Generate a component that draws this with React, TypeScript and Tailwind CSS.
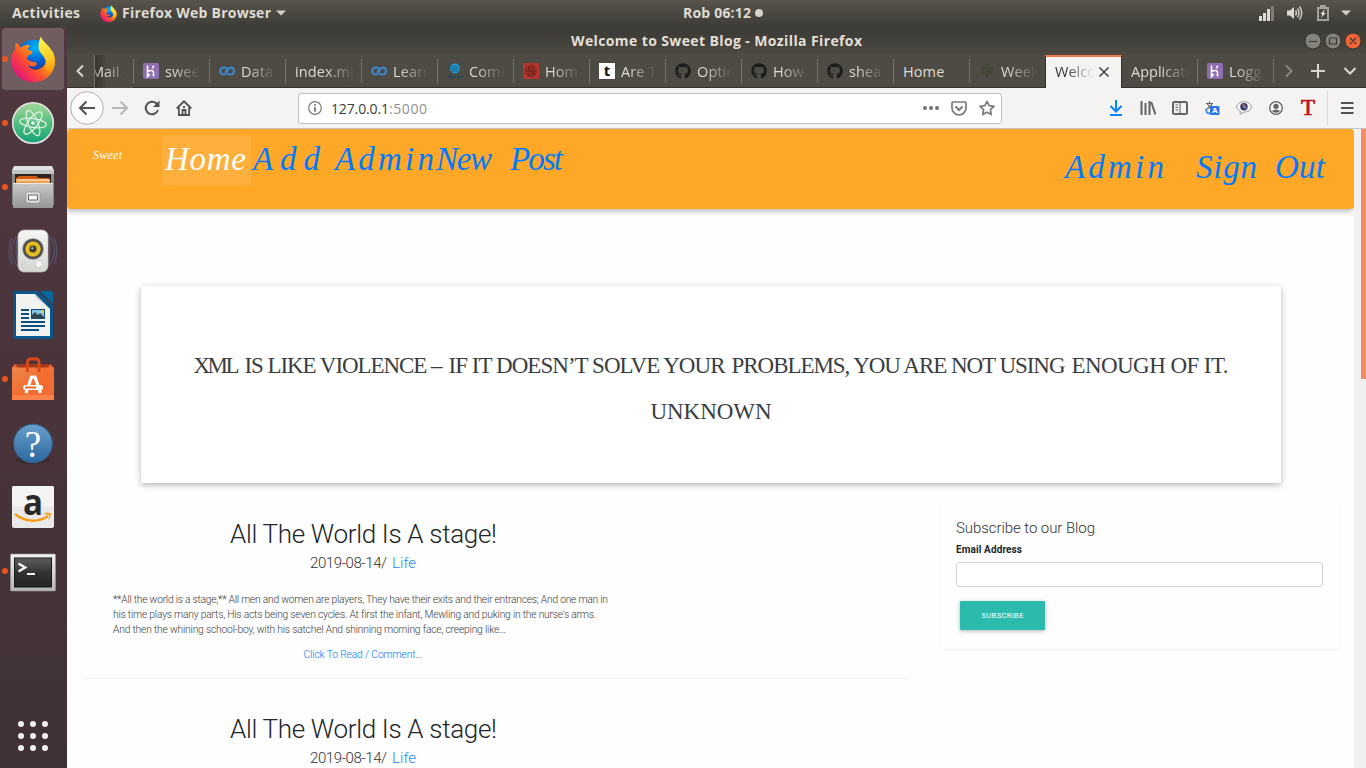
import { useLayoutEffect, useRef, useState } from "react";
import type { ReactNode } from "react";
import { FaGithub } from "react-icons/fa";

/* Text run spread evenly over a fixed width by letter spacing. */
function Fit({ w, children, className = "" }: { w: number; children: string; className?: string }) {
  const ref = useRef<HTMLSpanElement>(null);
  const [gap, setGap] = useState(0);
  useLayoutEffect(() => {
    const el = ref.current;
    if (!el) return;
    el.style.letterSpacing = "0px";
    const natural = el.getBoundingClientRect().width;
    const next = (w - natural) / Math.max(1, children.length - 1);
    el.style.letterSpacing = `${next}px`;
    setGap(next);
  }, [w, children]);
  return (
    <span className={`block whitespace-nowrap ${className}`} style={{ width: w }}>
      <span ref={ref} style={{ letterSpacing: gap }}>{children}</span>
    </span>
  );
}

function FirefoxLogo({ size, id }: { size: number; id: string }) {
  return (
    <svg width={size} height={size} viewBox="0 0 44 44" className="shrink-0">
      <defs>
        <radialGradient id={`${id}g`} cx="0.55" cy="0.2" r="0.8">
          <stop offset="0" stopColor="#00b8f5" />
          <stop offset="0.45" stopColor="#0669d8" />
          <stop offset="1" stopColor="#2b1d78" />
        </radialGradient>
        <linearGradient id={`${id}o`} x1="0.9" y1="0.1" x2="0.1" y2="0.8">
          <stop offset="0" stopColor="#ffd633" />
          <stop offset="0.35" stopColor="#ff980e" />
          <stop offset="0.65" stopColor="#ff4a33" />
          <stop offset="1" stopColor="#e3127e" />
        </linearGradient>
        <linearGradient id={`${id}y`} x1="0.5" y1="0" x2="0.6" y2="1">
          <stop offset="0" stopColor="#fff44f" />
          <stop offset="0.6" stopColor="#ffcf25" />
          <stop offset="1" stopColor="#ff9a12" />
        </linearGradient>
      </defs>
      <circle cx="23" cy="21" r="17.5" fill={`url(#${id}g)`} />
      <path d="M5.500 6.500C7 7 9 9 10 11C13 9 16 8 19 9L16.500 13L21 14.500C22 16 21 17.500 17.500 18.500L16 22C18 24 20 24 22.500 25C25 24.500 26 26 25 28C22 30 20 29 17 28C20 33 27 34 32 29C35 25 36 20 34 13L41 15C43 20 44 27 41 33C36 42 28 45 20 44C9 43 1 34 1 23C1 18 3 15 5 13C5 10 5 8 5.500 6.500Z" fill={`url(#${id}o)`} />
      <path d="M29.500 0.500C31 5 37 9 40 14C43 19 44 25 42 30C40 34 36 34 33 31C36 27 34 21 30 17C26 13 27 6 29.500 0.500Z" fill={`url(#${id}y)`} />
    </svg>
  );
}

function Atom() {
  return (
    <svg width="44" height="44" viewBox="0 0 44 44">
      <defs>
        <linearGradient id="atom" x1="0" y1="0" x2="0" y2="1">
          <stop offset="0" stopColor="#a5d99b" />
          <stop offset="0.5" stopColor="#56bd80" />
          <stop offset="1" stopColor="#12a276" />
        </linearGradient>
      </defs>
      <circle cx="22" cy="22" r="20.300" fill="url(#atom)" stroke="#e4e4e2" strokeWidth="1.600" />
      <g fill="none" stroke="#e8f7ea" strokeWidth="1.200">
        <ellipse cx="22" cy="22" rx="13.500" ry="4.500" transform="rotate(8 22 22)" />
        <ellipse cx="22" cy="22" rx="13.500" ry="4.800" transform="rotate(67 22 22)" />
        <ellipse cx="22" cy="22" rx="13.500" ry="4.800" transform="rotate(127 22 22)" />
      </g>
      <circle cx="22" cy="22" r="1.800" fill="#fff" />
    </svg>
  );
}

function Files() {
  return (
    <svg width="44" height="46" viewBox="0 0 44 46">
      <defs>
        <linearGradient id="cab" x1="0" y1="0" x2="0" y2="1">
          <stop offset="0" stopColor="#c9c9c9" />
          <stop offset="1" stopColor="#969696" />
        </linearGradient>
      </defs>
      <path d="M3 2H41L43 6V41H1V6Z" fill="#8a8a8a" />
      <path d="M3 2H41L43 7H1Z" fill="#e2e2e2" />
      <rect x="1" y="6" width="42" height="4" fill="#c4c4c4" />
      <rect x="4" y="10" width="36" height="10" fill="#2c2523" />
      <path d="M5 14L8 12H25L28 14H38V20H5Z" fill="#d55a13" />
      <path d="M5 15H39V20H5Z" fill="#eba150" />
      <path d="M6 16H38" stroke="#fff3df" />
      <path d="M2 19H42V44H2Z" fill="url(#cab)" />
      <path d="M2 19.500H42" stroke="#e9e9e9" />
      <rect x="15" y="28" width="14" height="11" rx="2" fill="#e2e2e2" stroke="#868686" strokeWidth="0.600" />
      <rect x="17.500" y="31" width="9" height="5" fill="#f7f7f7" stroke="#555" strokeWidth="0.900" />
    </svg>
  );
}

function Rhythmbox() {
  return (
    <svg width="50" height="46" viewBox="0 0 50 46">
      <defs>
        <linearGradient id="spk" x1="0" y1="0" x2="0" y2="1">
          <stop offset="0" stopColor="#f6f6f4" />
          <stop offset="1" stopColor="#d5d5d2" />
        </linearGradient>
      </defs>
      <g fill="none" stroke="#5f76ab" strokeWidth="1.200" opacity="0.450">
        <path d="M8 9C2 18 2 28 9 38M4 10C0 19 0 27 4 36M11 5C7 15 7 30 12 42" />
        <path d="M42 9C48 18 48 28 41 38M46 10C50 19 50 27 46 36M39 5C43 15 43 30 38 42" />
      </g>
      <rect x="10" y="2" width="30" height="42" rx="6" fill="url(#spk)" stroke="#bdbdba" strokeWidth="0.700" />
      <circle cx="25" cy="21" r="10.500" fill="#4c4c50" stroke="#aaa" strokeWidth="0.700" />
      <circle cx="25" cy="21" r="7.800" fill="#d5ad10" />
      <circle cx="25" cy="21" r="6" fill="none" stroke="#f5de62" strokeWidth="1" />
      <circle cx="25" cy="21" r="3.300" fill="#353538" />
      <circle cx="24.300" cy="20.300" r="1.200" fill="#aaa" />
      <circle cx="31" cy="36" r="3.600" fill="#f6f6f6" stroke="#c2c2c2" strokeWidth="0.700" />
      <rect x="14" y="34" width="4" height="5" rx="1" fill="none" stroke="#ccc" strokeWidth="0.600" />
    </svg>
  );
}

function Writer() {
  return (
    <svg width="42" height="48" viewBox="0 0 42 48">
      <path d="M3 0H26L41 15V46Q41 48 39 48H3Q1 48 1 46V2Q1 0 3 0Z" fill="#07568a" />
      <path d="M28 0H39Q41 0 41 2V13Z" fill="#02669f" />
      <path d="M4 3H23L38 18V45H4Z" fill="#f2f2f1" />
      <path d="M23 3L38 18L24 6Z" fill="#bcbcbb" />
      <g fill="#0a4f7e">
        <rect x="9" y="18" width="8" height="2" />
        <rect x="9" y="22" width="8" height="2" />
        <rect x="9" y="26" width="8" height="2" />
        <rect x="9" y="30" width="24" height="2" />
        <rect x="9" y="34" width="24" height="2" />
        <rect x="9" y="38" width="18" height="2" />
        <rect x="19" y="18" width="14" height="10" />
      </g>
      <rect x="20" y="19" width="12" height="8" fill="#86c4e8" />
      <path d="M20 27V24L23 21L26 24L28 22L32 26V27Z" fill="#34464c" />
      <circle cx="30.500" cy="20.500" r="1.500" fill="#f4d145" />
    </svg>
  );
}

function Software() {
  return (
    <svg width="44" height="46" viewBox="0 0 44 46">
      <defs>
        <linearGradient id="bag" x1="0" y1="0" x2="1" y2="1">
          <stop offset="0" stopColor="#ea8850" />
          <stop offset="0.500" stopColor="#f36d30" />
          <stop offset="1" stopColor="#f06a35" />
        </linearGradient>
      </defs>
      <path d="M3 8H40L43 12H1Z" fill="#a53a18" />
      <path d="M1 12L4 8L7 12ZM43 12L39 8L37 12Z" fill="#ec6336" />
      <rect x="1" y="11.500" width="42" height="32.500" fill="url(#bag)" />
      <rect x="1" y="39" width="42" height="5" fill="#ff8b55" opacity="0.700" />
      <path d="M16.500 16V6Q16.500 3 19.500 3H25Q28 3 28 6V16" fill="none" stroke="#d9481c" strokeWidth="2.800" />
      <path d="M15 37L20.500 21H24L29.500 37" fill="none" stroke="#fff" strokeWidth="3.200" />
      <rect x="12" y="29" width="20" height="5" rx="2.500" fill="#fff" />
      <rect x="14" y="30.500" width="11" height="2" fill="#f06a2c" />
    </svg>
  );
}

function Help() {
  return (
    <svg width="44" height="44" viewBox="0 0 44 44">
      <defs>
        <linearGradient id="help" x1="0" y1="0" x2="0" y2="1">
          <stop offset="0" stopColor="#699fca" />
          <stop offset="1" stopColor="#2c679f" />
        </linearGradient>
      </defs>
      <ellipse cx="22" cy="39" rx="17" ry="4" fill="#261d20" opacity="0.400" />
      <circle cx="22" cy="22.500" r="19.300" fill="url(#help)" stroke="#2f6291" />
      <text x="22" y="36" textAnchor="middle" fontSize="37" fill="#fff" fontFamily="Liberation Serif, serif">?</text>
    </svg>
  );
}

function Amazon() {
  return (
    <svg width="44" height="44" viewBox="0 0 44 44">
      <rect x="1" y="1" width="42" height="42" rx="2" fill="#e9e9e9" />
      <rect x="1" y="1" width="42" height="20" rx="2" fill="#f4f4f4" />
      <text x="22" y="29.500" textAnchor="middle" fontSize="36" fontWeight="700" fill="#292929" fontFamily="Open Sans, sans-serif" textLength="20" lengthAdjust="spacingAndGlyphs">a</text>
      <path d="M4 29C14 37 27 38 37 31" fill="none" stroke="#f99b12" strokeWidth="2.400" />
      <path d="M32 29C35 27 38 27.500 40 28.500C40 31 38.500 34 37 35.500C38 33 38.500 31 38 30Q35 29 32 29Z" fill="#f99b12" />
    </svg>
  );
}

function Terminal() {
  return (
    <svg width="46" height="40" viewBox="0 0 46 40">
      <defs>
        <linearGradient id="term" x1="0" y1="0" x2="0" y2="1">
          <stop offset="0" stopColor="#5d5d5d" />
          <stop offset="0.500" stopColor="#333" />
          <stop offset="1" stopColor="#252525" />
        </linearGradient>
        <linearGradient id="frame" x1="0" y1="0" x2="0" y2="1">
          <stop offset="0" stopColor="#f1f1f1" />
          <stop offset="1" stopColor="#b5b5b4" />
        </linearGradient>
      </defs>
      <rect x="0.500" y="1" width="45" height="37" rx="1" fill="url(#frame)" stroke="#999" strokeWidth="0.600" />
      <rect x="4" y="4.500" width="38" height="30" fill="#171717" />
      <rect x="5" y="5.500" width="36" height="28" fill="url(#term)" />
      <path d="M8.500 10.500L15 14.500L8.500 18.500" fill="none" stroke="#f2f2f2" strokeWidth="2.600" />
      <rect x="17" y="20" width="8" height="2" fill="#f2f2f2" />
    </svg>
  );
}

function AppGrid() {
  return (
    <svg width="32" height="32" viewBox="0 0 32 32" fill="#f0eeee">
      {[4, 16, 28].map((y) => [4, 16, 28].map((x) => <circle key={`${x}-${y}`} cx={x} cy={y} r="3" />))}
    </svg>
  );
}

function DockItem({ children, active, running }: { children: ReactNode; active?: boolean; running?: boolean }) {
  return (
    <div className="relative flex h-16 w-[67px] items-center justify-center">
      {active && <div className="absolute top-px left-[2px] h-[62px] w-[62px] rounded bg-[#705d60]" />}
      {running && <div className="absolute top-[29px] left-[2px] h-[6px] w-[6px] rounded-full bg-[#e95420]" />}
      <div className="relative -ml-px">{children}</div>
    </div>
  );
}

function Heroku() {
  return (
    <svg width="16" height="16" viewBox="0 0 16 16">
      <rect width="16" height="16" rx="2" fill="#8f6db1" />
      <path d="M4.500 2.500V8.500C7.500 7 10.500 7 10.500 9.300V13.500M10.500 2.500C10.500 3.800 10 4.700 9.300 5.500M4.500 10.500V13.500L6.300 12Z" fill="none" stroke="#fff" strokeWidth="1.600" />
    </svg>
  );
}
function Infinity() {
  return (
    <svg width="16" height="16" viewBox="0 0 16 16">
      <path d="M9.500 6.300C8 4.200 6.300 4.600 4.500 4.600C0 4.900 0 11.300 4.500 11.500C8.300 11.500 8 4.600 11.800 4.600C16 4.800 16 11.300 11.800 11.500C10.500 11.600 9.300 11.400 8.400 10.100M6 8H9" fill="none" stroke="#3e85c6" strokeWidth="2.100" />
    </svg>
  );
}
function Spotipo() {
  return (
    <svg width="16" height="16" viewBox="0 0 16 16">
      <circle cx="8" cy="5.500" r="5" fill="#1998d5" />
      <path d="M3.500 4.300Q8 2 12.500 4.300M3.500 6.500Q8 4.500 12.500 6.500M4.500 8.600Q8 7 11.500 8.600" fill="none" stroke="#22536e" strokeWidth="0.700" />
      <text x="8" y="15" textAnchor="middle" fontSize="4.500" fontWeight="700" fill="#1c4a66" fontFamily="Open Sans, sans-serif" textLength="15" lengthAdjust="spacingAndGlyphs">Spotipo</text>
    </svg>
  );
}
function RedSwirl() {
  return (
    <svg width="16" height="16" viewBox="0 0 16 16">
      <rect width="16" height="16" fill="#b5352c" />
      <g fill="none" stroke="#672520" strokeWidth="0.900">
        {[0, 60, 120, 180, 240, 300].map((a) => (
          <path key={a} d="M8 8Q9 4 12 4.500Q14.500 6 13 8.500Q12 6 10 7" transform={`rotate(${a} 8 8)`} />
        ))}
      </g>
    </svg>
  );
}
function LetterT() {
  return (
    <svg width="16" height="16" viewBox="0 0 16 16">
      <rect width="16" height="16" fill="#fff" />
      <text x="8" y="13" textAnchor="middle" fontSize="15" fontWeight="700" fill="#111" fontFamily="Open Sans, sans-serif">t</text>
    </svg>
  );
}
function Tree() {
  return (
    <svg width="16" height="16" viewBox="0 0 16 16">
      <path d="M7.300 7H8.800L9 15H7Z" fill="#4a3c30" />
      <g fill="#424732">
        <circle cx="8" cy="3.500" r="2.500" />
        <circle cx="4" cy="6" r="2.300" />
        <circle cx="12" cy="6" r="2.300" />
        <circle cx="5" cy="9" r="1.700" />
        <circle cx="11.500" cy="9" r="1.700" />
      </g>
    </svg>
  );
}

const github = <FaGithub size={16} color="#1c1c1b" />;

function Tab({ icon, label, fade = true }: { icon?: ReactNode; label: string; fade?: boolean }) {
  return (
    <div className="flex h-[33px] w-[76px] shrink-0 items-center">
      <div className="h-6 w-px bg-[#77746c]" />
      <div className="flex h-full w-[75px] items-center gap-[6px] pl-[9px]">
        {icon}
        <span
          className={`block flex-1 overflow-hidden text-[14.5px] leading-[33px] tracking-[0.1px] whitespace-nowrap ${icon ? "mr-[9px]" : "mr-[7px]"} ${fade ? "[mask-image:linear-gradient(to_left,transparent,black_28px)]" : ""}`}
        >
          {label}
        </span>
      </div>
    </div>
  );
}

function TopBar() {
  return (
    <header className="flex h-7 items-center bg-linear-to-b from-[#58544c] to-[#3c3b37] pb-[2px] text-sm leading-[26px] font-bold text-[#dfdbd2]">
      <Fit w={68} className="ml-3">Activities</Fit>
      <div className="ml-5"><FirefoxLogo size={17} id="fs" /></div>
      <Fit w={149} className="ml-[5px]">Firefox Web Browser</Fit>
      <svg width="10" height="6" viewBox="0 0 10 6" className="ml-[5px]"><path d="M0 0.500H10L5 5.500Z" fill="#d4d0c8" /></svg>
      <Fit w={68} className="ml-[397px]">Rob 06:12</Fit>
      <div className="ml-[4px] h-2 w-2 rounded-full bg-[#d5d2ca]" />
      <svg width="16" height="16" viewBox="0 0 16 16" className="ml-[496px]">
        <path d="M0 11H3V16H0ZM4 8H7V16H4ZM8 4H11V16H8Z" fill="#dfdbd2" />
        <path d="M12 1H15V16H12Z" fill="#817d75" />
      </svg>
      <svg width="18" height="16" viewBox="0 0 18 16" className="ml-[12px]">
        <path d="M0 5.500H3L7 2V14L3 10.500H0Z" fill="#dfdbd2" />
        <path d="M8.500 5.500Q10.500 8 8.500 10.500M10.500 3.500Q13.700 8 10.500 12.500M12.500 1.500Q17 8 12.500 14.500" fill="none" stroke="#cfccc4" strokeWidth="1.500" />
      </svg>
      <svg width="12" height="16" viewBox="0 0 12 16" className="ml-[12px]">
        <path d="M1 3H11V15H1ZM4 3V1H8V3" fill="none" stroke="#a5a29a" strokeWidth="2" />
        <path d="M8 4L3.500 9H5.500L4 13L8.800 8H6.500Z" fill="#e8e5dd" />
      </svg>
      <svg width="10" height="6" viewBox="0 0 10 6" className="ml-[12px]"><path d="M0 0.500H10L5 5.500Z" fill="#d4d0c8" /></svg>
    </header>
  );
}

function TitleBar() {
  return (
    <div className="flex h-[26px] items-center bg-linear-to-b from-[#3b3a36] to-[#4a4841] text-sm leading-[26px] font-bold text-[#e3dfd6]">
      <Fit w={291} className="ml-[504px]">Welcome to Sweet Blog - Mozilla Firefox</Fit>
      <svg width="58" height="18" viewBox="0 0 58 18" className="ml-[442px]">
        <g stroke="#35342f" strokeWidth="1">
          <circle cx="9" cy="9" r="8" fill="#85827b" />
          <circle cx="29" cy="9" r="8" fill="#85827b" />
          <circle cx="49" cy="9" r="8" fill="#ee6434" />
        </g>
        <path d="M5 9.500H13M25.500 6H32.500V12H25.500ZM46 6L52 12M52 6L46 12" fill="none" stroke="#393832" strokeWidth="1.200" />
      </svg>
    </div>
  );
}

function TabStrip() {
  return (
    <div className="flex h-[34px] items-center border-b border-[#32312d] bg-[#4e4b44] pt-px text-[#dedbd3]">
      <div className="flex w-[27px] shrink-0 justify-end pr-[10px]">
        <svg width="8" height="14" viewBox="0 0 8 14"><path d="M7 1.500L1.500 7L7 12.500" fill="none" stroke="#d9d6cf" strokeWidth="2" /></svg>
      </div>
      <div className="flex h-[33px] w-[39px] shrink-0 items-center overflow-hidden border-l border-[#77746c] bg-linear-to-r from-[#35342f] to-[#4e4b44] to-30%">
        <span className="-ml-[4px] block text-[14.5px] leading-[33px] whitespace-nowrap [mask-image:linear-gradient(to_right,transparent,black_9px,black_14px,transparent_36px)]">Mail -</span>
      </div>
      <Tab icon={<Heroku />} label="sweet" />
      <Tab icon={<Infinity />} label="Data" />
      <Tab label="index.mp" />
      <Tab icon={<Infinity />} label="Learn" />
      <Tab icon={<Spotipo />} label="Comm" />
      <Tab icon={<RedSwirl />} label="Home" />
      <Tab icon={<LetterT />} label="Are T" />
      <Tab icon={github} label="Optio" />
      <Tab icon={github} label="How" />
      <Tab icon={github} label="shea2" />
      <Tab label="Home" fade={false} />
      <Tab icon={<Tree />} label="Week" />
      <div className="flex h-[33px] w-[77px] shrink-0 items-center border-t-2 border-r border-l border-t-[#f0774a] border-r-[#32312d] border-l-[#32312d] bg-[#f4f3f1] pl-[9px] text-[#333]">
        <span className="block w-[39px] overflow-hidden text-[14.5px] leading-[30px] whitespace-nowrap [mask-image:linear-gradient(to_left,transparent,black_28px)]">Welco</span>
        <svg width="12" height="12" viewBox="0 0 12 12" className="ml-[4px]"><path d="M1.500 1.500L10.500 10.500M10.500 1.500L1.500 10.500" stroke="#4b4b4a" strokeWidth="1.700" /></svg>
      </div>
      <div className="flex w-[75px] shrink-0 pl-[9px]">
        <span className="block w-[58px] overflow-hidden text-[14.5px] leading-[33px] whitespace-nowrap [mask-image:linear-gradient(to_left,transparent,black_28px)]">Applicati</span>
      </div>
      <Tab icon={<Heroku />} label="Logg" />
      <div className="h-6 w-px shrink-0 bg-[#77746c]" />
      <svg width="8" height="14" viewBox="0 0 8 14" className="ml-[11px]"><path d="M1 1.500L6.500 7L1 12.500" fill="none" stroke="#8c8981" strokeWidth="2" /></svg>
      <svg width="14" height="14" viewBox="0 0 14 14" className="ml-[18px]"><path d="M7 0V14M0 7H14" stroke="#d9d6cf" strokeWidth="2" /></svg>
      <svg width="12" height="8" viewBox="0 0 12 8" className="ml-[19px]"><path d="M0.500 1L6 6.500L11.500 1" fill="none" stroke="#d9d6cf" strokeWidth="2" /></svg>
    </div>
  );
}

function ToolBox({ children }: { children: ReactNode }) {
  return <div className="flex w-8 shrink-0 items-center justify-center">{children}</div>;
}

function Toolbar() {
  return (
    <div className="flex h-[41px] items-center border-b border-[#c4c4c3] bg-[#f4f3f1] text-[#5b5b5a]">
      <svg width="36" height="36" viewBox="0 0 36 36" className="ml-[2px]">
        <circle cx="18" cy="18" r="16.300" fill="#fcfcfc" stroke="#b1b0af" />
        <path d="M26 18H11M17.500 11.500L11 18L17.500 24.500" fill="none" stroke="#515150" strokeWidth="2" />
      </svg>
      <div className="-ml-px flex">
        <ToolBox>
          <svg width="16" height="16" viewBox="0 0 16 16"><path d="M0 8H15M8.500 1.500L15 8L8.500 14.500" fill="none" stroke="#b9b8b7" strokeWidth="2" /></svg>
        </ToolBox>
        <ToolBox>
          <svg width="16" height="16" viewBox="0 0 16 16">
            <path d="M14 10A6.300 6.300 0 1 1 12.300 3.300L14 5" fill="none" stroke="#515150" strokeWidth="2" />
            <path d="M15.500 0.500V7H9Z" fill="#515150" />
          </svg>
        </ToolBox>
        <ToolBox>
          <svg width="16" height="16" viewBox="0 0 16 16" fill="none" stroke="#515150" strokeWidth="1.800">
            <path d="M0.700 8.500L8 1.300L15.300 8.500M2.900 7.500V15H13.100V7.500" />
            <path d="M6.500 15V10H9.500V15M7 7H9" />
          </svg>
        </ToolBox>
      </div>
      <div className="ml-[98px] flex h-[31px] w-[704px] items-center rounded-[3px] border border-[#c0bfbe] bg-white">
        <svg width="14" height="14" viewBox="0 0 14 14" className="ml-[9px]">
          <circle cx="7" cy="7" r="6.300" fill="none" stroke="#7b7b7a" strokeWidth="1.200" />
          <path d="M7 3V4.700M7 6V10.700" stroke="#6b6b6a" strokeWidth="1.600" />
        </svg>
        <span className="ml-[9px] flex text-sm leading-[29px] text-[#3c3c3b]">
          <Fit w={58}>127.0.0.1</Fit>
          <Fit w={38} className="text-[#8f8f8e]">:5000</Fit>
        </span>
        <svg width="18" height="6" viewBox="0 0 18 6" className="ml-[495px]" fill="#6f6f6e"><circle cx="3" cy="3" r="2" /><circle cx="9" cy="3" r="2" /><circle cx="15" cy="3" r="2" /></svg>
        <svg width="16" height="15" viewBox="0 0 16 15" className="ml-[11px]" fill="none" stroke="#7b7b7a">
          <path d="M2 1H14Q15 1 15 2V7A7 7 0 0 1 1 7V2Q1 1 2 1Z" strokeWidth="1.700" />
          <path d="M4.500 5.500L8 9L11.500 5.500" strokeWidth="2" />
        </svg>
        <svg width="16" height="16" viewBox="0 0 16 16" className="ml-[12px]">
          <path d="M8 1.300L10.100 5.700L15 6.300L11.400 9.700L12.300 14.600L8 12.200L3.700 14.600L4.600 9.700L1 6.300L5.900 5.700Z" fill="none" stroke="#7b7b7a" strokeWidth="1.700" strokeLinejoin="round" />
        </svg>
      </div>
      <div className="ml-[98px] flex">
        <ToolBox>
          <svg width="14" height="16" viewBox="0 0 14 16"><path d="M7 0V11M1.500 6L7 11.500L12.500 6M1 15H13" fill="none" stroke="#0a84ff" strokeWidth="2" /></svg>
        </ToolBox>
        <ToolBox>
          <svg width="16" height="14" viewBox="0 0 16 14"><path d="M1.500 0V14M5.500 2V14M9.500 0V14M11.200 1L15.500 13.500" fill="none" stroke="#636362" strokeWidth="2" /></svg>
        </ToolBox>
        <ToolBox>
          <svg width="16" height="14" viewBox="0 0 16 14"><rect x="1" y="1" width="14" height="12" rx="1.500" fill="none" stroke="#636362" strokeWidth="2" /><path d="M8 1V13M3.500 4H6M3.500 6.500H6M3.500 9H6" stroke="#636362" strokeWidth="1.100" /></svg>
        </ToolBox>
        <ToolBox>
          <svg width="15" height="14" viewBox="0 0 15 14">
            <path d="M1 2.500H8M4.500 0.500V2.500M7 2.500Q6 6 1.500 8M2.500 3Q4 6 7 7" fill="none" stroke="#64665e" strokeWidth="1.200" />
            <path d="M1 8Q1 12.500 5 12.500" fill="none" stroke="#4b93e8" strokeWidth="2" />
            <rect x="5" y="5" width="9.500" height="9" rx="1" fill="#2d7ae7" />
            <text x="9.800" y="12" textAnchor="middle" fontSize="7.500" fontWeight="700" fill="#fff" fontFamily="Open Sans, sans-serif">A</text>
          </svg>
        </ToolBox>
        <ToolBox>
          <svg width="16" height="14" viewBox="0 0 16 14">
            <path d="M8 0.700C12.200 0.700 15.300 3 15.300 6C15.300 9 12.200 11 8 11L4 13.200L4.500 10.300C2 9.400 0.700 8 0.700 6C0.700 3 3.800 0.700 8 0.700Z" fill="#f5f5f5" stroke="#999" strokeWidth="0.900" />
            <circle cx="8" cy="5.700" r="3.700" fill="#353a68" />
            <path d="M6 4Q8 2 9.500 4.500L8 8Z" fill="#a26d72" />
            <circle cx="9.500" cy="6.500" r="1.200" fill="#6580c5" />
          </svg>
        </ToolBox>
        <ToolBox>
          <svg width="14" height="14" viewBox="0 0 14 14">
            <circle cx="7" cy="7" r="6.300" fill="none" stroke="#636362" strokeWidth="1.300" />
            <circle cx="7" cy="5.300" r="2.600" fill="#636362" />
            <path d="M2.800 10Q7 6.800 11.200 10Q7 13.500 2.800 10Z" fill="#636362" />
          </svg>
        </ToolBox>
        <ToolBox>
          <span className="font-['Liberation_Serif',serif] text-[23px] leading-6 text-[#bd1414] [-webkit-text-stroke:0.7px_#bd1414]">T</span>
        </ToolBox>
      </div>
      <div className="ml-[3px] h-[34px] w-px bg-[#d9d8d7]" />
      <svg width="13" height="12" viewBox="0 0 13 12" className="ml-[13px]"><path d="M0 1H12.500M0 6H12.500M0 11H12.500" stroke="#515150" strokeWidth="2" /></svg>
    </div>
  );
}

function SiteNav() {
  return (
    <nav className="flex h-20 shrink-0 items-start rounded bg-[#ffa726] font-['Liberation_Serif',serif] text-[33px] text-[#007bff] italic shadow-[0_2px_5px_0_rgba(0,0,0,0.2),0_2px_10px_0_rgba(0,0,0,0.12)]">
      <Fit w={29} className="ml-[26px] text-[12px] leading-[53px] text-white">Sweet</Fit>
      <div className="mt-[6px] ml-[40px] flex h-[50px] leading-[48px]">
        <div className="h-[50px] w-[89px] bg-white/10 pl-[3px] text-white"><Fit w={81}>Home</Fit></div>
        <Fit w={67} className="ml-[2px]">Add</Fit>
        <Fit w={99} className="ml-[15px]">Admin</Fit>
        <Fit w={56} className="ml-[2px]">New</Fit>
        <Fit w={53} className="ml-[18px]">Post</Fit>
      </div>
      <div className="ml-[502px] flex leading-[76px]">
        <Fit w={99}>Admin</Fit>
        <Fit w={61} className="ml-[32px]">Sign</Fit>
        <Fit w={50} className="ml-[18px]">Out</Fit>
      </div>
    </nav>
  );
}

function Post() {
  return (
    <article className="h-[178px] w-[828px] rounded-[3px] pl-[31px] shadow-[0_1px_2px_rgba(0,0,0,0.06)]">
      <div className="flex w-[500px] flex-col items-center font-light">
        <h2 className="mt-[17px] text-[26px] leading-[34px] text-[#212529]"><Fit w={267} className="ml-px">All The World Is A stage!</Fit></h2>
        <div className="flex gap-[5px] text-[15px] leading-6 text-[#333]">
          <Fit w={77}>2019-08-14/</Fit>
          <Fit w={24} className="text-[#1e88f5]">Life</Fit>
        </div>
        <div className="mt-[17px] w-full text-[10.3px] leading-[15px] text-[#3d3d3d]">
          <Fit w={495}>**All the world is a stage,** All men and women are players, They have their exits and their entrances; And one man in</Fit>
          <Fit w={483}>his time plays many parts, His acts being seven cycles. At first the infant, Mewling and puking in the nurse's arms.</Fit>
          <Fit w={393}>And then the whining school-boy, with his satchel And shinning morning face, creeping like...</Fit>
        </div>
        <div className="mt-[10px] text-[10.3px] leading-[15px] text-[#007bff]"><Fit w={119}>Click To Read / Comment...</Fit></div>
      </div>
    </article>
  );
}

function Subscribe() {
  return (
    <aside className="h-[149px] w-[399px] rounded-[3px] pl-4 shadow-[0_1px_2px_rgba(0,0,0,0.06)]">
      <h3 className="mt-[17px] text-[15px] leading-[22px] font-light text-[#333]"><Fit w={139}>Subscribe to our Blog</Fit></h3>
      <label className="mt-[3px] block text-[10px] leading-[15px] font-bold text-[#212529]"><Fit w={66}>Email Address</Fit></label>
      <input className="mt-[5px] block h-[25px] w-[367px] rounded-[3px] border border-[#ced4da] bg-white" />
      <button className="mt-[14px] ml-1 flex h-[29px] w-[85px] items-center justify-center rounded-[1px] bg-[#2bbbad] text-[7.6px] leading-[29px] text-white shadow-[0_1px_4px_rgba(0,0,0,0.3)]">
        <Fit w={42}>SUBSCRIBE</Fit>
      </button>
    </aside>
  );
}

function Page() {
  return (
    <div className="flex h-[639px] overflow-hidden bg-[#f1f0ef]">
      <main className="flex h-full w-[1287px] flex-col overflow-hidden bg-[#fefefe] font-['Roboto',sans-serif]">
        <SiteNav />
        <section className="mt-[77px] ml-[74px] flex h-[197px] w-[1140px] shrink-0 flex-col items-center bg-white pt-[57px] font-['Liberation_Serif',serif] text-[23px] leading-[46px] text-[#3a3d42] uppercase shadow-[0_2px_5px_0_rgba(0,0,0,0.2),0_2px_10px_0_rgba(0,0,0,0.1)]">
          <p className="flex gap-[6px]">
            <Fit w={46} className="-mr-[1px]">XML</Fit>
            <Fit w={198}>is like violence –</Fit>
            <Fit w={277}>if it doesn’t solve your</Fit>
            <Fit w={334}>problems, you are not using</Fit>
            <Fit w={157}>enough of it.</Fit>
          </p>
          <Fit w={121}>Unknown</Fit>
        </section>
        <div className="mt-[17px] flex shrink-0 gap-[30px] pl-[15px]">
          <div className="flex flex-col gap-[17px]">
            <Post />
            <Post />
          </div>
          <Subscribe />
        </div>
      </main>
      <div className="flex w-3 justify-end"><div className="h-[250px] w-[5px] bg-[#f58b68]" /></div>
    </div>
  );
}

export default function App() {
  return (
    <div className="flex h-[768px] w-[1366px] flex-col overflow-hidden bg-[#4b343a] font-['Open_Sans',sans-serif]">
      <TopBar />
      <div className="-mt-px flex h-[741px]">
        <aside className="flex w-[67px] shrink-0 flex-col bg-linear-to-b from-[#513840] via-[#49343a] to-[#3f3235]">
          <DockItem active running><FirefoxLogo size={46} id="fl" /></DockItem>
          <DockItem running><Atom /></DockItem>
          <DockItem running><Files /></DockItem>
          <DockItem><Rhythmbox /></DockItem>
          <DockItem><Writer /></DockItem>
          <DockItem running><Software /></DockItem>
          <DockItem><Help /></DockItem>
          <DockItem><Amazon /></DockItem>
          <DockItem running><div className="pt-[4px]"><Terminal /></div></DockItem>
          <div className="mt-auto"><DockItem><AppGrid /></DockItem></div>
        </aside>
        <div className="flex w-[1299px] flex-col">
          <div className="h-px bg-[#3c3b37]" />
          <TitleBar />
          <TabStrip />
          <Toolbar />
          <Page />
        </div>
      </div>
    </div>
  );
}
